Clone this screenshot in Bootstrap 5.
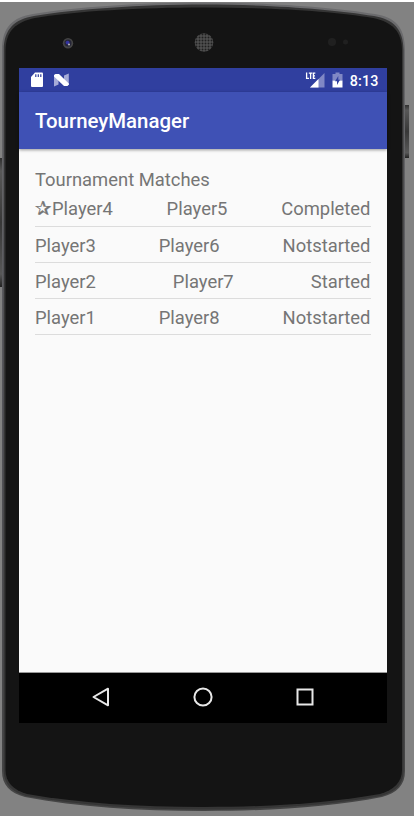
<!DOCTYPE html>
<html lang="en">
<head>
<meta charset="utf-8">
<meta name="viewport" content="width=device-width, initial-scale=1">
<title>TourneyManager</title>
<link href="https://cdn.jsdelivr.net/npm/bootstrap@5.3.0/dist/css/bootstrap.min.css" rel="stylesheet">
<style>
body{background:#828282;font-family:Roboto,"Liberation Sans",sans-serif;width:414px;height:816px;overflow:hidden}
.phone{height:816px;padding:68px 27px 93px 19px}
.shell{z-index:0}
.screen{z-index:1;background:#fafafa}
.statusbar{height:24px;background:#303f9f;padding:0 8.5px 0 11px;font-size:14.3px;font-weight:500;line-height:24px}
.clock{letter-spacing:.15px;padding-top:1px;margin-left:7px}
.battery{margin-left:7px}
.appbar{height:57px;background:#3f51b5;padding:2px 0 0 16px;font-size:20.4px;font-weight:500;box-shadow:0 1px 3px rgba(0,0,0,.4);z-index:1}
.matches{padding:18px 16.5px 0 16px;color:#757575;font-size:18.4px;line-height:24px}
.heading{padding-top:1px;height:28px}
.match{height:36px;padding-top:7px;border-bottom:1px solid #dcdcdc}
.match.first{height:32px;padding-top:2.4px}
.star{font-family:"DejaVu Sans",sans-serif;display:inline-block;width:17px;font-size:19.5px;line-height:20px;-webkit-text-stroke:.3px #757575}
.navkeys{height:51px;background:#000;border-top:1px solid #999;padding:0 72px 2px}
</style>
<script src="https://cdn.jsdelivr.net/npm/bootstrap@5.3.0/dist/js/bootstrap.bundle.min.js"></script>
</head>
<body>
<div class="phone position-relative">
  <svg class="shell position-absolute top-0 start-0" width="414" height="816" viewBox="0 0 414 816" aria-hidden="true">
    <defs>
      <pattern id="mesh" width="3" height="3" patternUnits="userSpaceOnUse"><rect width="3" height="3" fill="#505050"/><circle cx="1.5" cy="1.5" r="1" fill="#202020"/></pattern>
      <linearGradient id="key" x2="0" y2="1"><stop offset="0" stop-color="#303030"/><stop offset=".1" stop-color="#585858"/><stop offset=".5" stop-color="#383838"/><stop offset=".9" stop-color="#585858"/><stop offset="1" stop-color="#222"/></linearGradient>
      <linearGradient id="rim" x2="0" y2="1"><stop offset="0" stop-color="#6c6c6e"/><stop offset=".5" stop-color="#55555a"/><stop offset="1" stop-color="#444"/></linearGradient>
    </defs>
    <rect width="414" height="2" fill="#fff"/>
    <rect x="0" y="158" width="3" height="129" fill="url(#key)"/>
    <rect x="404" y="105" width="5" height="53" fill="url(#key)"/>
    <path d="M2 50C2 27 13 17 33 14C75 7 140 2.500 204 2.500S333 7 375 14C395 17 405 27 405 50V771C405 785 397 793 382 797C330 807 270 811 204 811S78 807 25 797C10 793 2 785 2 771Z" fill="url(#rim)"/>
    <path d="M3.800 50C3.800 29 15 19 34 16C76 9 140 4.500 204 4.500S332 9 374 16C393 19 403.500 29 403.500 50V771C403.500 784 396 792 381 796C330 805 270 809.500 204 809.500S79 805 26 796C12 792 3.800 784 3.800 771Z" fill="#353535"/>
    <path d="M5.500 51C5.500 31 16 22 35 18C76 11 140 7.500 204 7.500S332 11 373 18C392 22 402 31 402 51V770C402 782 394 790 380 794C330 803 270 807 204 807S79 803 27 794C13 790 5.500 782 5.500 770Z" fill="#141414"/>
    <circle cx="68" cy="43.300" r="5.200" fill="#454545"/><circle cx="68" cy="43" r="3.500" fill="#252538"/><circle cx="67.600" cy="42.600" r="1.900" fill="#3434a0"/><circle cx="69" cy="44.500" r="1" fill="#bbb"/>
    <circle cx="204" cy="42.500" r="9.300" fill="url(#mesh)"/>
    <circle cx="332" cy="42" r="4" fill="#202020"/><circle cx="345.500" cy="42" r="2.500" fill="#202020"/>
  </svg>
  <main class="screen position-relative d-flex flex-column h-100">
    <div class="statusbar d-flex align-items-center text-white">
      <svg width="14" height="16" viewBox="0 0 14 16"><path d="M5 .5H12Q13 .5 13 1.500V14Q13 15 12 15H2Q1 15 1 14V5Z" fill="#fff"/><path d="M5.800 2.200V5M8.300 2.200V5M10.800 2.200V5" stroke="#303f9f" stroke-width="1.200"/></svg>
      <svg class="ms-2" width="18" height="16" viewBox="0 0 18 16"><path d="M2 3L6.500 6V12.500L2 14.500ZM16.800 1.500V13L12 11V3.500Z" fill="#a6acd8"/><path d="M2 3L3.500 2H7L16.800 11.500V12.500L15.500 14H12L2 4.500Z" fill="#fff"/></svg>
      <svg class="ms-auto" width="20" height="18" viewBox="0 0 20 18"><path d="M19.500 2V16.500H5Z" fill="#8088c5"/><path d="M13.500 8V16.500H5Z" fill="#fff"/><path d="M1.600 1.500V7.400H4M3.800 2.200H7.300M5.600 2.200V8M10.300 2.200H8.400V7.400H10.300M8.400 4.800H10" stroke="#fff" stroke-width="1.300" fill="none"/></svg>
      <svg class="battery" width="11" height="18" viewBox="0 0 11 18"><path d="M3.500 1.500H7.500V3H10.500V9.500H.5V3H3.500Z" fill="#8088c5"/><path d="M.5 9.500H10.500V16.500H.5Z" fill="#fff"/><path d="M6.300 5L3 10.200H5V14L8 8.800H6.300Z" fill="#303f9f"/></svg>
      <span class="clock">8:13</span>
    </div>
    <header class="appbar d-flex align-items-center text-white position-relative">TourneyManager</header>
    <section class="matches flex-grow-1">
      <div class="heading">Tournament Matches</div>
      <div class="match first d-flex justify-content-between"><span class="text-nowrap"><span class="star">✰</span>Player4</span><span>Player5</span><span>Completed</span></div>
      <div class="match d-flex justify-content-between"><span>Player3</span><span>Player6</span><span>Notstarted</span></div>
      <div class="match d-flex justify-content-between"><span>Player2</span><span>Player7</span><span>Started</span></div>
      <div class="match d-flex justify-content-between"><span>Player1</span><span>Player8</span><span>Notstarted</span></div>
    </section>
    <nav class="navkeys d-flex align-items-center justify-content-between">
      <svg width="20" height="22" viewBox="0 0 20 22"><path d="M17 2.700V19.300L2.500 11Z" fill="none" stroke="#e8e8e8" stroke-width="2" stroke-linejoin="round"/></svg>
      <svg width="22" height="22" viewBox="0 0 22 22"><circle cx="11" cy="11" r="8.600" fill="none" stroke="#e8e8e8" stroke-width="2"/></svg>
      <svg width="20" height="20" viewBox="0 0 20 20"><rect x="2.500" y="2.500" width="15" height="15" fill="none" stroke="#e8e8e8" stroke-width="2"/></svg>
    </nav>
  </main>
</div>
</body>
</html>
